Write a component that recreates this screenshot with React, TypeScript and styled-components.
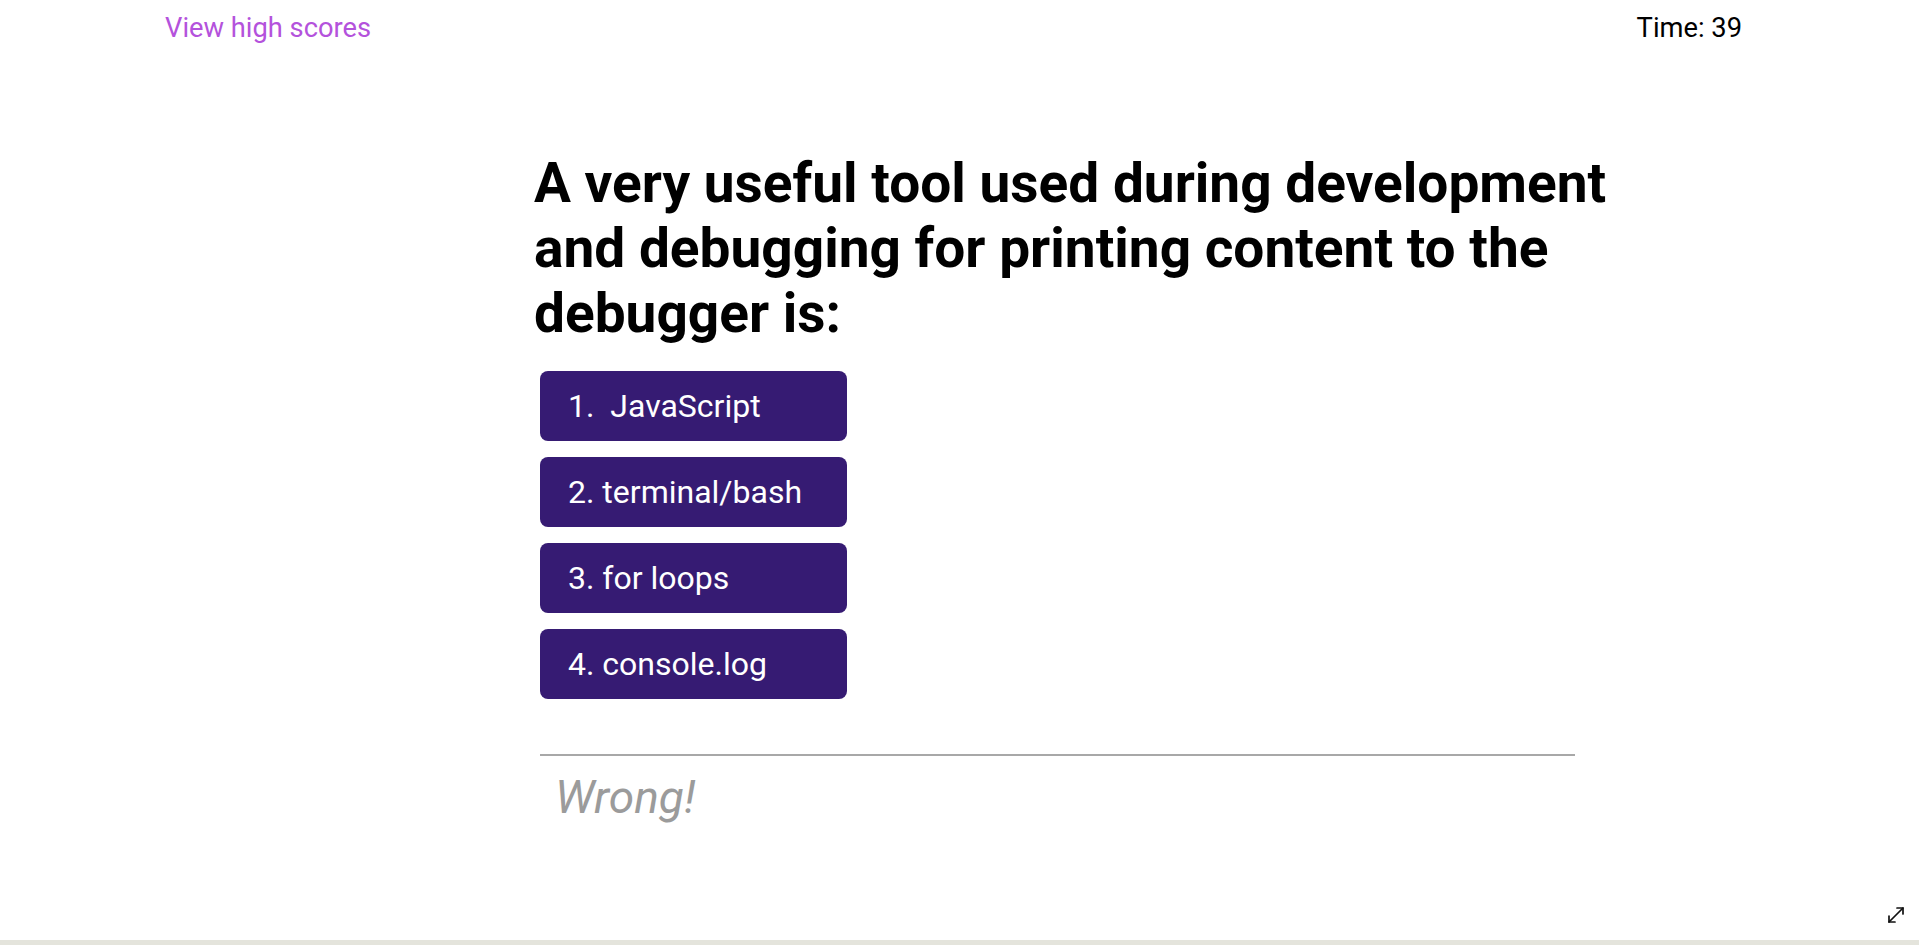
import React from "react";
import styled, { createGlobalStyle } from "styled-components";

const GlobalStyle = createGlobalStyle`
  html, body {
    margin: 0;
    padding: 0;
    background: #ffffff;
    font-family: Roboto, "Liberation Sans", Arial, sans-serif;
  }
  * { box-sizing: border-box; }
`;

const Page = styled.div`
  position: relative;
  display: flex;
  flex-direction: column;
  height: 945px;
  overflow: hidden;
`;

const Header = styled.header`
  display: flex;
  justify-content: space-between;
  align-items: flex-start;
  padding: 12px 177px 0 165px;
  font-size: 27.3px;
`;

const HighScoresLink = styled.a`
  color: #b452dc;
  text-decoration: none;
  cursor: pointer;
`;

const Timer = styled.div`
  color: #000000;
`;

const Main = styled.main`
  flex: 1;
  display: flex;
  flex-direction: column;
  padding-left: 534px;
  padding-top: 107px;
`;

const Question = styled.h1`
  margin: 0;
  width: 1100px;
  font-size: 55px;
  font-weight: 700;
  line-height: 65px;
  color: #000000;
`;

const Choices = styled.ol`
  list-style: none;
  margin: 25px 0 0 6px;
  padding: 0;
  display: flex;
  flex-direction: column;
  gap: 16px;
`;

const ChoiceButton = styled.button`
  display: flex;
  align-items: center;
  width: 307px;
  height: 70px;
  padding: 0 0 0 28px;
  border: none;
  border-radius: 8px;
  background: #361b73;
  color: #ffffff;
  font-family: Roboto, "Liberation Sans", Arial, sans-serif;
  font-size: 32px;
  cursor: pointer;
  white-space: pre;
`;

const Divider = styled.hr`
  margin: 55px 0 0 6px;
  width: 1035px;
  height: 2px;
  border: none;
  background: #a8a8a8;
`;

const Feedback = styled.p`
  margin: 14px 0 0 21px;
  font-size: 46px;
  font-style: italic;
  color: #9b9b9b;
`;

const BottomStrip = styled.div`
  height: 5px;
  background: #e4e4dc;
`;

const ResizeHandle = styled.div`
  position: absolute;
  right: 12px;
  bottom: 19px;
  width: 22px;
  height: 22px;
  color: #111111;
`;

const choices = ["1.  JavaScript", "2. terminal/bash", "3. for loops", "4. console.log"];

export default function App() {
  return (
    <>
      <GlobalStyle />
      <Page>
        <Header>
          <HighScoresLink>View high scores</HighScoresLink>
          <Timer>Time: 39</Timer>
        </Header>
        <Main>
          <Question>
            A very useful tool used during development and debugging for printing content to the debugger is:
          </Question>
          <Choices>
            {choices.map((c) => (
              <li key={c}>
                <ChoiceButton>{c}</ChoiceButton>
              </li>
            ))}
          </Choices>
          <Divider />
          <Feedback>Wrong!</Feedback>
        </Main>
        <BottomStrip />
        <ResizeHandle>
          <svg width="22" height="22" viewBox="0 0 22 22" fill="none" stroke="currentColor" strokeWidth="1.7" strokeLinecap="round" strokeLinejoin="round">
            <line x1="4" y1="18" x2="18" y2="4" />
            <polyline points="12,4 18,4 18,10" />
            <polyline points="4,12 4,18 10,18" />
          </svg>
        </ResizeHandle>
      </Page>
    </>
  );
}
